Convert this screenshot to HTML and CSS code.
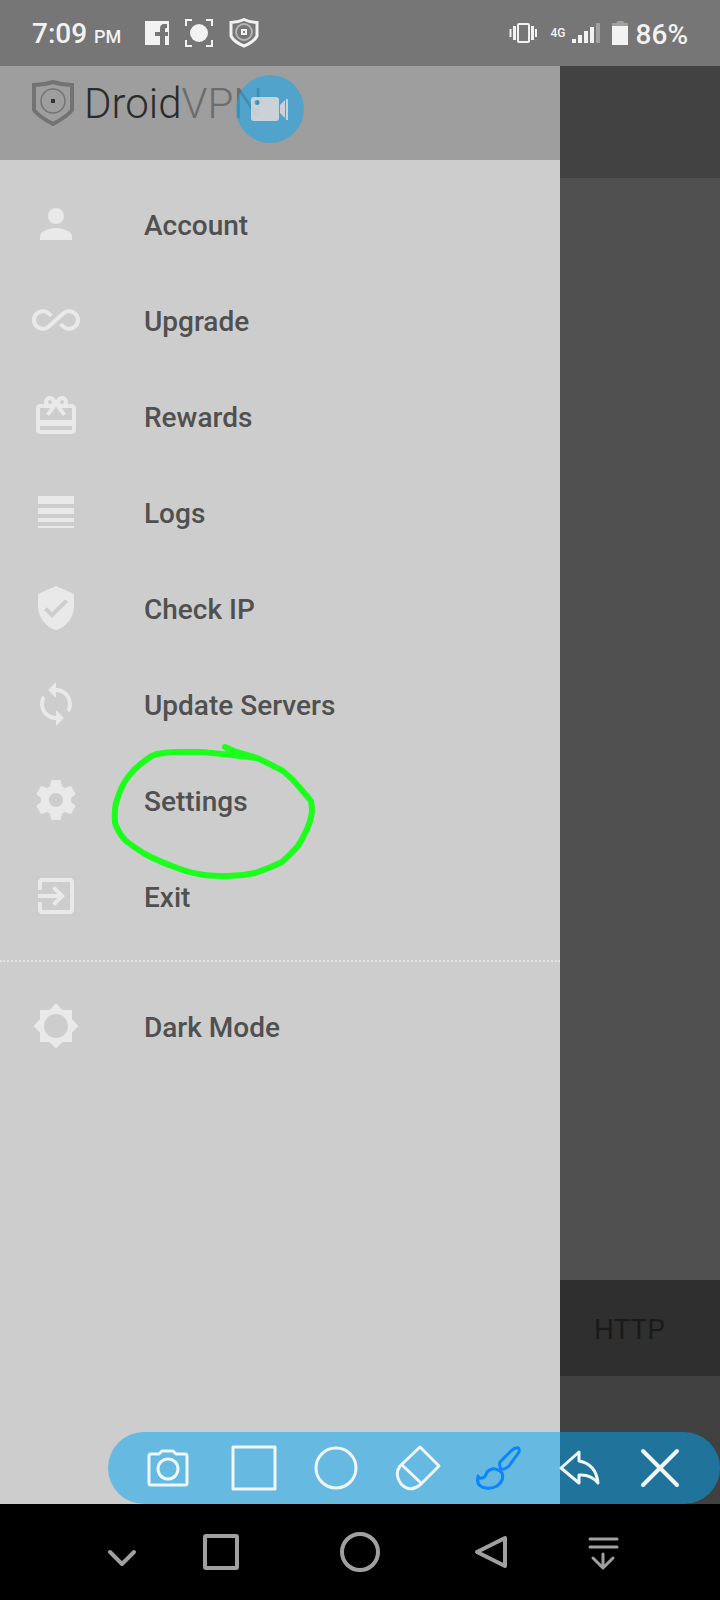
FILE: index.html
```html
<!DOCTYPE html>
<html lang="en">
<head>
<meta charset="utf-8">
<meta name="viewport" content="width=device-width, initial-scale=1">
<title>DroidVPN</title>
<link rel="stylesheet" href="styles.css">
</head>
<body>
<header class="status">
  <div class="clock"><span>7:09</span> <small>PM</small></div>
  <div class="notices">
    <svg width="24" height="24" viewBox="0 0 24 24"><path fill="#f2f2f2" fill-rule="evenodd" d="M0 0H24V24H20V15H23V11H20V9Q20 7 21 7H22V3H19Q15 3 15 8V11H10V15H15V24H0Z"/></svg>
    <svg width="28" height="28" viewBox="0 0 28 28"><circle cx="14" cy="14" r="9" fill="#f2f2f2"/><path d="M1 7V1H7M21 1H27V7M27 21V27H21M7 27H1V21" fill="none" stroke="#f2f2f2" stroke-width="2"/></svg>
    <svg width="30" height="30" viewBox="0 0 30 30" fill="none" stroke="#f2f2f2"><path d="M15 1.500Q21 4.500 28 4.500V18Q25 24 15 28Q5 24 2 18V4.500Q9 4.500 15 1.500Z" stroke-width="3"/><circle cx="15" cy="14" r="8" stroke="#b5b5b5" stroke-width="2"/><rect x="13" y="12" width="4" height="4" stroke-width="2"/></svg>
  </div>
  <div class="signals">
    <svg width="28" height="20" viewBox="0 0 28 20" fill="none" stroke="#f2f2f2"><rect x="9" y="1" width="11" height="18" rx="1" stroke-width="2"/><path d="M5.500 3V17M23.500 3V17" stroke-width="3"/><path d="M1.500 6V14M27 6V14" stroke-width="2"/></svg>
    <span class="net">4G</span>
    <svg class="bars" width="28" height="20" viewBox="0 0 28 20" fill="#f2f2f2"><path d="M0 16H4V20H0ZM6 12H10V20H6ZM12 8H16V20H12ZM18 4H22V20H18Z"/><path fill="#a0a0a0" d="M24 0H28V20H24Z"/></svg>
    <svg class="battery" width="16" height="24" viewBox="0 0 16 24"><path fill="#a0a0a0" d="M0 2H4L6 0H11L13 2H16V6H0Z"/><path fill="#f2f2f2" d="M0 5H16V24H0Z"/></svg>
    <span class="percent">86%</span>
  </div>
</header>

<main class="screen">
  <aside class="drawer">
    <div class="brand">
      <svg width="42" height="46" viewBox="0 0 42 46" fill="none" stroke="#737373"><path d="M21 2Q30 5 40 5V30Q36 36 21 44Q6 36 2 30V5Q12 5 21 2Z" stroke-width="4"/><circle cx="21" cy="21" r="12" stroke-width="1.500"/><rect x="19" y="19" width="4" height="4" fill="#333" stroke="none"/></svg>
      <div class="wordmark">Droid<span>VPN</span></div>
      <button class="bubble" aria-label="Record video"><svg width="38" height="26" viewBox="0 0 38 26"><path fill="#dedada" fill-opacity=".85" fill-rule="evenodd" d="M3 1H25Q28 1 28 4V22Q28 25 25 25H3Q0 25 0 22V4Q0 1 3 1ZM6 4A2.500 2.500 0 1 0 6 9A2.500 2.500 0 1 0 6 4ZM29 9L34 4V22L29 17ZM35 3H37V24H35Z"/></svg></button>
    </div>
    <nav class="menu">
      <a class="item" href="#account"><svg viewBox="0 0 24 24"><path d="M12 12c2.210 0 4-1.790 4-4s-1.790-4-4-4-4 1.790-4 4 1.790 4 4 4zm0 2c-2.670 0-8 1.340-8 4v2h16v-2c0-2.660-5.330-4-8-4z"/></svg><span>Account</span></a>
      <a class="item" href="#upgrade"><svg viewBox="0 0 24 24"><path d="M18.600 6.620c-1.440 0-2.800.56-3.770 1.530L12 10.660 10.480 12h.01L7.800 14.390c-.64.64-1.490.99-2.400.99-1.870 0-3.390-1.510-3.390-3.380S3.530 8.620 5.400 8.620c.91 0 1.760.35 2.440 1.030l1.130 1 1.510-1.340L9.220 8.200C8.200 7.180 6.840 6.620 5.400 6.620 2.420 6.620 0 9.040 0 12s2.420 5.380 5.400 5.380c1.440 0 2.800-.56 3.770-1.530l2.830-2.500.01.010L13.520 12h-.01l2.690-2.390c.64-.64 1.490-.99 2.400-.99 1.870 0 3.390 1.510 3.390 3.380s-1.520 3.380-3.390 3.380c-.9 0-1.760-.35-2.440-1.030l-1.140-1.010-1.510 1.340 1.270 1.120c1.020 1.010 2.370 1.570 3.820 1.570 2.980 0 5.400-2.410 5.400-5.380s-2.420-5.370-5.400-5.370z"/></svg><span>Upgrade</span></a>
      <a class="item" href="#rewards"><svg viewBox="0 0 24 24"><path d="M20 6h-2.180c.11-.31.18-.65.18-1 0-1.660-1.340-3-3-3-1.050 0-1.960.54-2.500 1.350l-.5.670-.5-.68C10.960 2.540 10.050 2 9 2 7.340 2 6 3.340 6 5c0 .35.070.69.180 1H4c-1.110 0-1.990.89-1.990 2L2 19c0 1.110.89 2 2 2h16c1.110 0 2-.89 2-2V8c0-1.110-.89-2-2-2zm-5-2c.55 0 1 .45 1 1s-.45 1-1 1-1-.45-1-1 .45-1 1-1zM9 4c.55 0 1 .45 1 1s-.45 1-1 1-1-.45-1-1 .45-1 1-1zm11 15H4v-2h16v2zm0-5H4V8h5.080L7 10.830 8.620 12 11 8.760l1-1.360 1 1.360L15.380 12 17 10.830 14.920 8H20v6z"/></svg><span>Rewards</span></a>
      <a class="item" href="#logs"><svg viewBox="0 0 24 24"><path d="M3 4H21V8H3ZM3 10H21V13H3ZM3 15H21V17H3ZM3 19H21V20H3Z"/></svg><span>Logs</span></a>
      <a class="item" href="#check-ip"><svg viewBox="0 0 24 24"><path d="M12 1L3 5v6c0 5.550 3.840 10.740 9 12 5.160-1.260 9-6.450 9-12V5l-9-4zm-2 16l-4-4 1.410-1.410L10 14.170l6.590-6.590L18 9l-8 8z"/></svg><span>Check IP</span></a>
      <a class="item" href="#update"><svg viewBox="0 0 24 24"><path d="M12 4V1L8 5l4 4V6c3.310 0 6 2.690 6 6 0 1.010-.25 1.970-.7 2.800l1.460 1.460C19.540 15.030 20 13.570 20 12c0-4.420-3.580-8-8-8zm0 14c-3.310 0-6-2.690-6-6 0-1.010.25-1.970.7-2.800L5.240 7.740C4.460 8.970 4 10.430 4 12c0 4.420 3.580 8 8 8v3l4-4-4-4v3z"/></svg><span>Update Servers</span></a>
      <a class="item" href="#settings"><svg viewBox="0 0 24 24"><path d="M19.430 12.980c.04-.32.070-.64.070-.98s-.03-.66-.07-.98l2.110-1.650c.19-.15.240-.42.120-.64l-2-3.460c-.12-.22-.39-.3-.61-.22l-2.490 1c-.52-.4-1.080-.73-1.690-.98l-.38-2.650C14.460 2.180 14.250 2 14 2h-4c-.25 0-.46.180-.49.420l-.38 2.650c-.61.250-1.170.59-1.690.98l-2.490-1c-.23-.09-.49 0-.61.220l-2 3.460c-.13.220-.07.490.12.640l2.110 1.650c-.04.320-.07.650-.07.980s.030.660.070.980l-2.110 1.650c-.19.150-.24.420-.12.640l2 3.460c.12.220.39.300.61.220l2.490-1c.52.400 1.080.730 1.690.980l.38 2.650c.030.240.240.420.490.420h4c.25 0 .46-.18.490-.42l.38-2.650c.61-.25 1.170-.59 1.690-.98l2.490 1c.23.090.49 0 .61-.22l2-3.460c.12-.22.070-.49-.12-.64l-2.110-1.650zM12 15.500c-1.930 0-3.500-1.570-3.500-3.500s1.570-3.500 3.500-3.500 3.500 1.570 3.500 3.500-1.570 3.500-3.500 3.500z"/></svg><span>Settings</span>
        <svg class="scribble" viewBox="108 740 210 142" aria-hidden="true"><path d="M225 747L234 751L257 758Q270 764 283 771Q292 778 300 788Q307 796 311 801Q312 806 312 812Q310 824 306 831Q301 842 297 847Q290 855 282 862Q268 869 255 873Q242 876 228 876Q212 876 205 875Q190 873 180 869Q160 862 145 854Q132 846 125 840Q118 832 115 823Q114 808 117 800Q121 786 128 777Q135 768 142 763Q150 756 157 754Q168 752 178 752H200Q215 753 257 758L228 751"/></svg></a>
      <a class="item" href="#exit"><svg viewBox="0 0 24 24"><path d="M10.090 15.590L11.500 17l5-5-5-5-1.410 1.410L12.670 11H3v2h9.670l-2.580 2.590zM19 3H5c-1.110 0-2 .9-2 2v4h2V5h14v14H5v-4H3v4c0 1.100.89 2 2 2h14c1.100 0 2-.9 2-2V5c0-1.100-.9-2-2-2z"/></svg><span>Exit</span></a>
      <hr class="rule">
      <a class="item" href="#dark"><svg viewBox="0 0 24 24"><path d="M20 8.690V4h-4.690L12 .69 8.690 4H4v4.690L.69 12 4 15.310V20h4.690L12 23.310 15.310 20H20v-4.690L23.310 12 20 8.690zM12 18c-3.310 0-6-2.690-6-6s2.690-6 6-6 6 2.690 6 6-2.690 6-6 6z"/></svg><span>Dark Mode</span></a>
    </nav>
  </aside>
  <section class="behind">
    <div class="behind-top"></div>
    <div class="behind-body"></div>
    <div class="behind-mode">HTTP</div>
    <div class="behind-foot"></div>
  </section>

  <div class="tools">
    <button aria-label="Screenshot"><svg viewBox="0 0 48 48"><path d="M7 10H15L18 7H29L32 10H41Q43 10 43 12V39Q43 41 41 41H7Q5 41 5 39V12Q5 10 7 10Z"/><circle cx="24" cy="25" r="10"/></svg></button>
    <button aria-label="Rectangle"><svg viewBox="0 0 48 48"><path d="M7 3H49V45H7Z"/></svg></button>
    <button aria-label="Circle"><svg viewBox="0 0 48 48"><circle cx="28" cy="24" r="20"/></svg></button>
    <button aria-label="Eraser"><svg viewBox="0 0 48 48"><path d="M30 3L49 22L30 41Q20 49 11 40Q4 30 10 22Z"/><path d="M12 21L31 39"/></svg></button>
    <button class="active" aria-label="Brush"><svg viewBox="0 0 48 48"><path d="M44 4Q48 3 47 8L37 22Q33 26 29 25Q27 23 28 18L39 7Q42 4 44 4Z"/><path d="M28 27Q21 22 15 28Q13 34 10 34Q7 35 6 32Q4 40 10 43Q18 46 25 42Q33 36 30 29Z"/></svg></button>
    <button aria-label="Undo"><svg viewBox="0 0 48 48"><path d="M7 24L25 8V17Q42 20 44 39Q37 30 25 31V39Z"/></svg></button>
    <button aria-label="Close"><svg viewBox="0 0 48 48"><path stroke-width="4" d="M7 7L41 41M41 7L7 41"/></svg></button>
  </div>
</main>

<footer class="keys">
  <button aria-label="Hide keys"><svg viewBox="0 0 48 48"><path d="M12 24L24 36L36 24"/></svg></button>
  <button aria-label="Recent apps"><svg viewBox="0 0 48 48"><rect x="8" y="8" width="32" height="32" rx="1"/></svg></button>
  <button aria-label="Home"><svg viewBox="0 0 48 48"><circle cx="24" cy="24" r="18"/></svg></button>
  <button aria-label="Back"><svg viewBox="0 0 48 48"><path d="M10 24L38 10V38Z"/></svg></button>
  <button aria-label="Notifications"><svg viewBox="0 0 48 48"><path stroke-width="3" d="M11 11H38M11 19H38M24 26V40M14 30L24 40L34 30"/></svg></button>
</footer>
</body>
</html>
```
FILE: styles.css
```css
* { box-sizing: border-box; }
body {
  margin: 0;
  min-height: 100vh;
  display: flex;
  flex-direction: column;
  background: #000;
  font-family: Roboto, "Liberation Sans", sans-serif;
  font-size: 28px;
}
svg { display: block; flex: none; overflow: visible; }
button { border: 0; padding: 0; background: none; cursor: pointer; }

.status {
  display: flex;
  align-items: center;
  height: 66px;
  padding: 0 32px;
  background: #767676;
  color: #f2f2f2;
  font-weight: 500;
}
.clock { width: 113px; flex: none; white-space: nowrap; line-height: 32px; padding-top: 4px; }
.clock small { font-size: 18px; }
.notices { display: flex; align-items: center; gap: 16px; }
.signals { display: flex; align-items: center; margin-left: auto; }
.net { margin: 0 6px 0 14px; font-size: 12px; }
.battery { margin: 0 8px 0 12px; }
.percent { line-height: 32px; padding-top: 4px; }

.screen {
  position: relative;
  flex: 1;
  display: grid;
  grid-template-columns: 7fr 2fr;
}
.drawer { background: #cdcdcd; }
.brand {
  position: relative;
  display: flex;
  align-items: flex-start;
  gap: 10px;
  height: 94px;
  padding: 14px 32px;
  background: #9e9e9e;
}
.wordmark {
  font-size: 42px;
  line-height: 48px;
  font-weight: 300;
  color: #2b2b2b;
}
.wordmark span { color: #6c6c6c; }
.bubble {
  position: absolute;
  left: 236px;
  top: 9px;
  width: 68px;
  height: 68px;
  border-radius: 50%;
  background: rgba(20, 168, 240, .55);
}
.bubble svg { margin: 0 auto; }

.menu { padding: 16px 0; }
.item {
  position: relative;
  display: flex;
  align-items: center;
  gap: 64px;
  height: 96px;
  padding: 0 32px;
  color: #505050;
  font-weight: 500;
  text-decoration: none;
}
.item > span { padding-top: 2px; }
.item > svg { width: 48px; height: 48px; fill: #e9e9e9; }
.item > .scribble {
  position: absolute;
  left: 108px;
  top: -12px;
  width: 210px;
  height: 142px;
  fill: none;
  stroke: #1cff1c;
  stroke-width: 6;
  stroke-linecap: round;
  stroke-linejoin: round;
  z-index: 1;
}
.rule { margin: 16px 0; border: 0; border-top: 2px dotted #e4e4e4; }

.behind { display: flex; flex-direction: column; background: #505050; }
.behind-top { height: 112px; background: #424242; }
.behind-body { flex: 1; }
.behind-mode {
  display: flex;
  align-items: center;
  height: 96px;
  padding: 2px 0 0 34px;
  background: #2f2f2f;
  color: #1a1a1a;
}
.behind-foot { height: 128px; background: #414141; }

.tools {
  position: absolute;
  right: 0;
  bottom: 0;
  width: 85%;
  height: 72px;
  padding: 0 36px;
  display: flex;
  align-items: center;
  justify-content: space-between;
  border-radius: 36px;
  background: rgba(0, 168, 248, .5);
}
.tools svg, .keys svg {
  width: 48px;
  height: 48px;
  fill: none;
  stroke: #f0f6fa;
  stroke-width: 3;
  stroke-linecap: round;
  stroke-linejoin: round;
}
.tools .active svg { stroke: #0a84ff; }

.keys {
  display: grid;
  grid-template-columns: 99fr 139fr 131fr 112fr 141fr;
  align-items: center;
  justify-items: start;
  height: 96px;
  padding-left: 98px;
}
.keys svg { stroke: #a0a0a0; stroke-width: 4; }
```
